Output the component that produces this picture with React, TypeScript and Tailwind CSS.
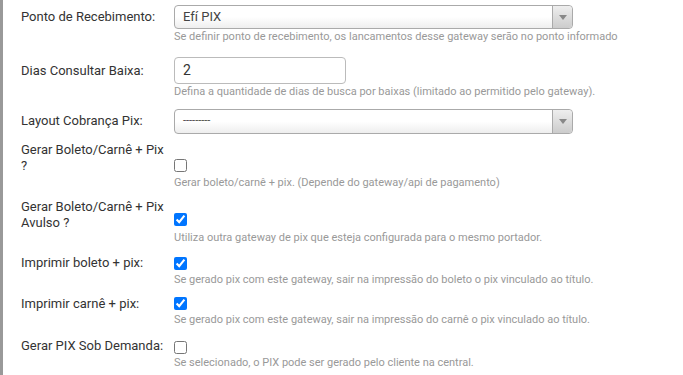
import React from "react";

const font = { fontFamily: "Roboto, 'Noto Sans', sans-serif" };

function Arrow() {
  return (
    <div className="absolute right-0 top-0 bottom-0 w-[20px] border-l border-[#aaa] rounded-r-[4px] bg-gradient-to-b from-[#eee] to-[#ccc] flex items-center justify-center">
      <div className="w-0 h-0 border-l-[4px] border-r-[4px] border-t-[5px] border-l-transparent border-r-transparent border-t-[#888]" />
    </div>
  );
}

function Select({ value, h, small }: { value: string; h: string; small?: boolean }) {
  return (
    <div
      className={`relative w-[399px] ${h} border border-[#aaa] rounded-[4px] bg-gradient-to-b from-white from-50% to-[#eee] flex items-center pl-[8px] text-[#444] ${small ? "text-[11px]" : "text-[13px]"}`}
    >
      <span>{value}</span>
      <Arrow />
    </div>
  );
}

function Help({ children, mt }: { children: React.ReactNode; mt: string }) {
  return <p className={`${mt} text-[11px] leading-[14px] text-[#999] whitespace-nowrap`}>{children}</p>;
}

function Check({ checked, mt }: { checked?: boolean; mt: string }) {
  return (
    <input
      type="checkbox"
      defaultChecked={checked}
      className={`block m-0 w-[13px] h-[13px] ${mt}`}
    />
  );
}

function Row({
  label,
  mt,
  lpt,
  children,
}: {
  label: React.ReactNode;
  mt: string;
  lpt: string;
  children: React.ReactNode;
}) {
  return (
    <div className={`flex items-start ${mt}`}>
      <div className={`w-[174px] shrink-0 pl-[21px] pr-[6px] ${lpt} text-[13px] leading-[16px] text-[#333]`}>{label}</div>
      <div className="flex flex-col">{children}</div>
    </div>
  );
}

export default function App() {
  return (
    <div style={font} className="w-[683px] h-[375px] bg-white border-l-[3px] border-[#999] overflow-hidden relative">
      <div className="-ml-[3px] pt-[5px]">
        <Row label="Ponto de Recebimento:" mt="mt-0" lpt="pt-[4px]">
          <Select value="Efí PIX" h="h-[24px]" />
          <Help mt="mt-[1px]">Se definir ponto de recebimento, os lancamentos desse gateway serão no ponto informado</Help>
        </Row>
        <Row label="Dias Consultar Baixa:" mt="mt-[13px]" lpt="pt-[6px]">
          <div className="w-[172px] h-[27px] border border-[#bbb] rounded-[4px] bg-white flex items-center pl-[8px] text-[14px] text-[#333]">
            2
          </div>
          <Help mt="mt-[1px]">Defina a quantidade de dias de busca por baixas (limitado ao permitido pelo gateway).</Help>
        </Row>
        <Row label="Layout Cobrança Pix:" mt="mt-[10px]" lpt="pt-[4px]">
          <Select value="---------" h="h-[25px]" small />
        </Row>
        <Row
          label={
            <>
              Gerar Boleto/Carnê + Pix
              <br />?
            </>
          }
          mt="mt-[8px]"
          lpt="pt-0"
        >
          <Check mt="mt-[17px]" />
          <Help mt="mt-[4px]">Gerar boleto/carnê + pix. (Depende do gateway/api de pagamento)</Help>
        </Row>
        <Row
          label={
            <>
              Gerar Boleto/Carnê + Pix
              <br />
              Avulso ?
            </>
          }
          mt="mt-[9px]"
          lpt="pt-0"
        >
          <Check checked mt="mt-[14px]" />
          <Help mt="mt-[5px]">Utiliza outra gateway de pix que esteja configurada para o mesmo portador.</Help>
        </Row>
        <Row label="Imprimir boleto + pix:" mt="mt-[10px]" lpt="pt-0">
          <Check checked mt="mt-[2px]" />
          <Help mt="mt-[3px]">Se gerado pix com este gateway, sair na impressão do boleto o pix vinculado ao título.</Help>
        </Row>
        <Row label="Imprimir carnê + pix:" mt="mt-[9px]" lpt="pt-0">
          <Check checked mt="mt-[1px]" />
          <Help mt="mt-[3px]">Se gerado pix com este gateway, sair na impressão do carnê o pix vinculado ao título.</Help>
        </Row>
        <Row label="Gerar PIX Sob Demanda:" mt="mt-[11px]" lpt="pt-0">
          <Check mt="mt-[3px]" />
          <Help mt="mt-[2px]">Se selecionado, o PIX pode ser gerado pelo cliente na central.</Help>
        </Row>
      </div>
    </div>
  );
}
